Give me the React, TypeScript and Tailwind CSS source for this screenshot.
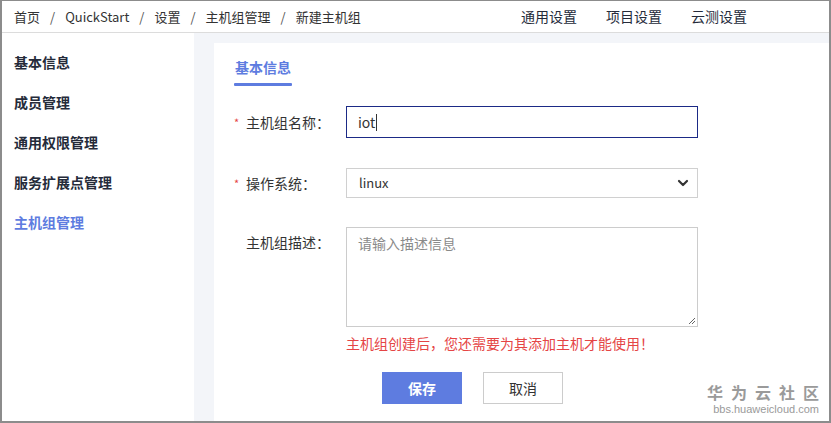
import React from "react";

const font = { fontFamily: '"Microsoft YaHei", "Noto Sans CJK SC", "Liberation Sans", sans-serif' };

const crumbs = ["首页", "QuickStart", "设置", "主机组管理", "新建主机组"];
const menu = ["基本信息", "成员管理", "通用权限管理", "服务扩展点管理", "主机组管理"];

function Label({ text, required }: { text: string; required?: boolean }) {
  return (
    <div className="w-[132px] flex items-center pl-[20px] text-[14px] text-[#333]">
      <span className="w-[12px] text-[#e54545] text-[11px]">{required ? "*" : ""}</span>
      <span>{text}</span>
    </div>
  );
}

export default function App() {
  return (
    <div
      className="w-[831px] h-[423px] overflow-hidden border-l-2 border-t border-r-2 border-b-2 border-[#8c8c8c] bg-[#f3f5f9] flex flex-col text-[#333]"
      style={font}
    >
      {/* top bar */}
      <div className="h-[32px] shrink-0 bg-white border-b border-[#dcdcdc] flex items-center pl-[12px] pr-[82px]">
        <div className="flex items-center text-[13px] text-[#333]">
          {crumbs.map((c, i) => (
            <React.Fragment key={c}>
              {i > 0 && <span className="mx-[10px] text-[#555]">/</span>}
              <span>{c}</span>
            </React.Fragment>
          ))}
        </div>
        <div className="ml-auto flex items-center gap-[29px] text-[14px] text-[#252b3a]">
          <span>通用设置</span>
          <span>项目设置</span>
          <span>云测设置</span>
        </div>
      </div>

      <div className="flex-1 flex min-h-0">
        {/* side menu */}
        <div className="w-[192px] shrink-0 bg-white pt-[9px] pl-[12px]">
          {menu.map((m, i) => (
            <div
              key={m}
              className={`h-[40px] flex items-center text-[14px] font-bold ${
                i === menu.length - 1 ? "text-[#5e7ce0]" : "text-[#252b3a]"
              }`}
            >
              {m}
            </div>
          ))}
        </div>

        {/* form panel */}
        <div className="flex-1 ml-[20px] mt-[10px] bg-white relative">
          <div className="pl-[20px] pt-[11px]">
            <div className="inline-flex flex-col">
              <span className="text-[14px] font-bold text-[#5e7ce0] leading-[18px] px-[1px]">基本信息</span>
              <span className="mt-[7px] h-[3px] bg-[#5e7ce0] rounded-[1px]" />
            </div>
          </div>

          <div className="mt-[20px] flex items-center">
            <Label text="主机组名称：" required />
            <div className="w-[352px] h-[32px] border border-[#1b2a86] flex items-center pl-[11px] text-[14px] text-[#333]">
              iot<span className="w-px h-[17px] bg-[#333] ml-[1px]" />
            </div>
          </div>

          <div className="mt-[30px] flex items-center">
            <Label text="操作系统：" required />
            <div className="w-[352px] h-[30px] border border-[#d0d0d0] flex items-center pl-[12px] pr-[8px] text-[13px] text-[#333]">
              <span>linux</span>
              <svg className="ml-auto" width="12" height="12" viewBox="0 0 12 12">
                <path d="M2 4l4 4 4-4" fill="none" stroke="#333" strokeWidth="2.2" strokeLinecap="round" strokeLinejoin="round" />
              </svg>
            </div>
          </div>

          <div className="mt-[29px] flex items-start">
            <div className="pt-[5px]">
              <Label text="主机组描述：" />
            </div>
            <div className="w-[352px] h-[100px] border border-[#cccccc] relative pl-[11px] pt-[5px] text-[14px] text-[#8a8a8a]">
              请输入描述信息
              <svg className="absolute right-[1px] bottom-[1px]" width="9" height="9" viewBox="0 0 9 9">
                <path d="M8 2L2 8M8 5L5 8" stroke="#666" strokeWidth="1" />
              </svg>
            </div>
          </div>

          <div className="ml-[132px] mt-[6px] text-[14px] text-[#e54545]">
            主机组创建后，您还需要为其添加主机才能使用！
          </div>

          <div className="ml-[168px] mt-[18px] flex gap-[21px]">
            <button className="w-[80px] h-[32px] bg-[#5e7ce0] text-white text-[14px] font-bold">保存</button>
            <button className="w-[80px] h-[32px] border border-[#cccccc] bg-white text-[14px] text-[#333]">取消</button>
          </div>

          {/* site watermark */}
          <div className="absolute right-[10px] bottom-[6px] flex flex-col items-end text-[#9a9a9a] leading-none">
            <span className="text-[16px] font-bold tracking-[8px] mr-[-8px]">华为云社区</span>
            <span className="text-[11px] mt-[4px]" style={{ fontFamily: '"Liberation Sans", sans-serif' }}>
              bbs.huaweicloud.com
            </span>
          </div>
        </div>
      </div>
    </div>
  );
}
